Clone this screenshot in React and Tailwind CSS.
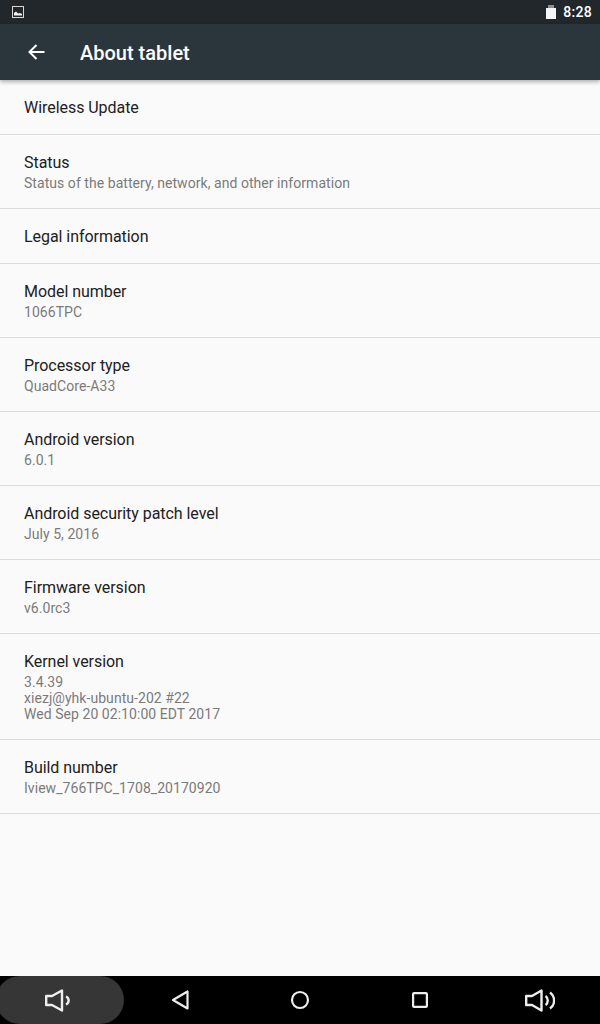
import React from 'react';

const rows = [
  { title: 'Wireless Update' },
  { title: 'Status', lines: ['Status of the battery, network, and other information'] },
  { title: 'Legal information' },
  { title: 'Model number', lines: ['1066TPC'] },
  { title: 'Processor type', lines: ['QuadCore-A33'] },
  { title: 'Android version', lines: ['6.0.1'] },
  { title: 'Android security patch level', lines: ['July 5, 2016'] },
  { title: 'Firmware version', lines: ['v6.0rc3'] },
  { title: 'Kernel version', lines: ['3.4.39', 'xiezj@yhk-ubuntu-202 #22', 'Wed Sep 20 02:10:00 EDT 2017'] },
  { title: 'Build number', lines: ['Iview_766TPC_1708_20170920'] },
];

const Row = ({ title, lines }) => (
  <div className="border-b border-[#dcdcdc] px-6 pt-[17px] pb-[15px]">
    <div className="text-[16px] leading-[22px] tracking-[-0.05px] text-[#212121]">{title}</div>
    {lines && (
      <div className="text-[14px] leading-[16px] tracking-[0.05px] text-[#7a7a7a] mt-[1px] mb-[2px]">
        {lines.map((l) => (
          <div key={l}>{l}</div>
        ))}
      </div>
    )}
  </div>
);

const App = () => {
  return (
    <div className="w-[600px] h-[1024px] flex flex-col overflow-hidden bg-[#fafafa] font-['Roboto',sans-serif]">
      <div className="h-6 bg-[#21272b] flex items-center justify-between pl-3 pr-2 shrink-0">
        <svg width="12" height="12" viewBox="0 0 12 12" fill="none">
          <rect x="0.5" y="0.5" width="11" height="11" stroke="#d8d8d8" strokeWidth="1" />
          <path d="M2 9.5V7L4 5.5L6 7.5L8 7L10 8V9.5Z" fill="#f2f2f2" />
        </svg>
        <div className="flex items-center gap-[7px]">
          <svg width="10" height="14" viewBox="0 0 10 14">
            <rect x="2" y="0" width="6" height="3" fill="#8f8f8f" />
            <rect x="0" y="3" width="10" height="11" fill="#f5f5f5" />
          </svg>
          <span className="text-[14px] leading-none font-medium text-white tracking-[0.3px]">8:28</span>
        </div>
      </div>

      <div className="h-14 bg-[#2b353c] flex items-center shrink-0 shadow-[0_2px_4px_rgba(0,0,0,0.3)] relative">
        <svg className="ml-7 mb-[1px]" width="17" height="16" viewBox="0 0 17 16" fill="none" stroke="#ffffff" strokeWidth="2">
          <path d="M16.5 8H2M8.5 1L1.5 8L8.5 15" />
        </svg>
        <span className="ml-[35px] mt-[2px] text-[20px] font-medium text-white">About tablet</span>
      </div>

      <div className="flex-1">
        {rows.map((r) => (
          <Row key={r.title} {...r} />
        ))}
      </div>

      <div className="h-12 bg-black flex items-center shrink-0 relative">
        <div className="absolute left-[-4px] top-0 w-[128px] h-12 rounded-[24px] bg-[#363636]" />
        <svg className="absolute left-[45px] top-[13px]" width="26" height="23" viewBox="0 0 26 23" fill="none" stroke="#eeeeee" strokeWidth="2.4" strokeLinejoin="round">
          <path d="M1.2 7H7L17 1.5V21.5L7 16H1.2Z" />
          <path d="M21 7.5C24.5 9 24.5 14 21 15.5" />
        </svg>
        <svg className="absolute left-[171px] top-[14px]" width="18" height="20" viewBox="0 0 18 20" fill="none" stroke="#eeeeee" strokeWidth="2.2" strokeLinejoin="round">
          <path d="M16.5 1.5V18.5L2 10Z" />
        </svg>
        <svg className="absolute left-[290px] top-[14px]" width="20" height="20" viewBox="0 0 20 20" fill="none" stroke="#eeeeee" strokeWidth="2.2">
          <circle cx="10" cy="10" r="8" />
        </svg>
        <svg className="absolute left-[412px] top-[16px]" width="16" height="16" viewBox="0 0 16 16" fill="none" stroke="#eeeeee" strokeWidth="2.2">
          <rect x="1.1" y="1.1" width="13.8" height="13.8" rx="1" />
        </svg>
        <svg className="absolute left-[525px] top-[13px]" width="30" height="23" viewBox="0 0 30 23" fill="none" stroke="#eeeeee" strokeWidth="2.4" strokeLinejoin="round">
          <path d="M1.2 7H7L16.5 1.5V21.5L7 16H1.2Z" />
          <path d="M20.5 7C23.5 9 23.5 14 20.5 16" />
          <path d="M25 3.5C30.5 7.5 30.5 15.5 25 19.5" />
        </svg>
      </div>
    </div>
  );
};

export default App;
